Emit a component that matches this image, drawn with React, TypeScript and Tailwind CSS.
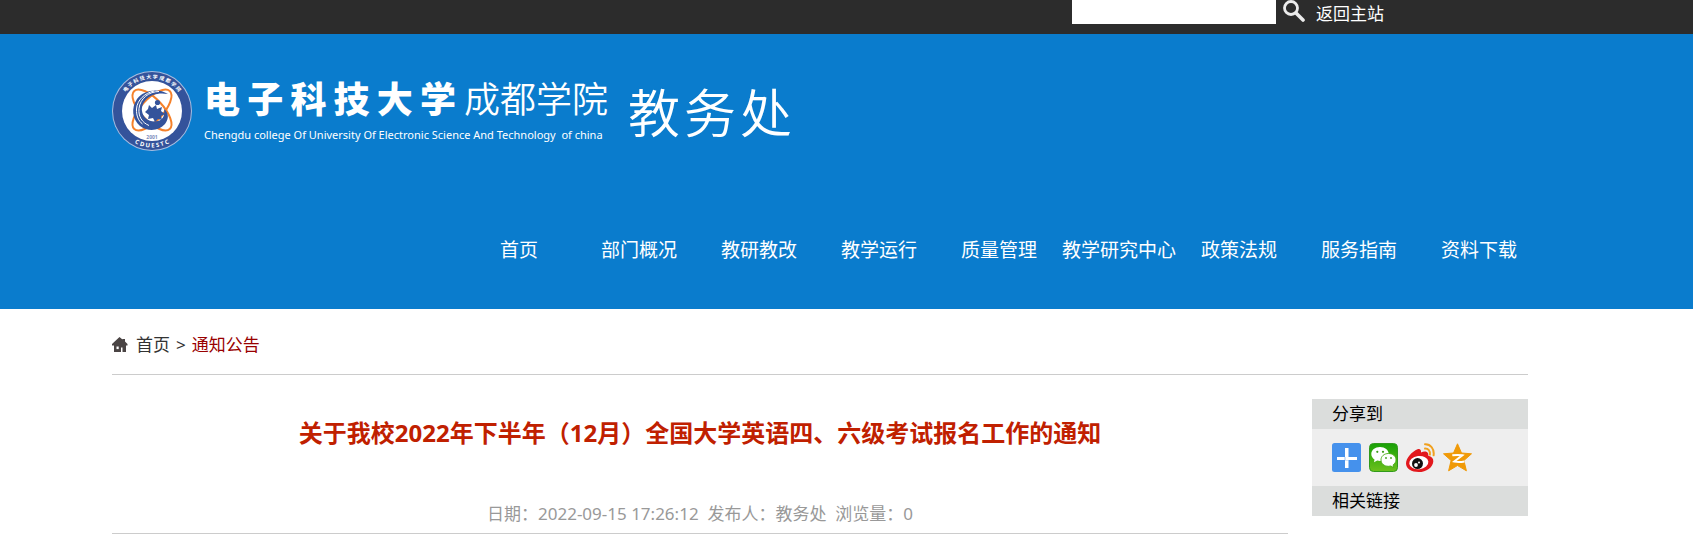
import React from 'react';

const navItems = [
  '首页',
  '部门概况',
  '教研教改',
  '教学运行',
  '质量管理',
  '教学研究中心',
  '政策法规',
  '服务指南',
  '资料下载',
];

const schoolName = ['电', '子', '科', '技', '大', '学'];
const officeName = ['教', '务', '处'];

const Emblem: React.FC = () => (
  <svg viewBox="0 0 80 80" className="h-20 w-20 shrink-0" role="img" aria-label="校徽">
    <defs>
      <path id="ring-top" d="M7.500 40a32.500 32.500 0 0 1 65 0" />
      <path id="ring-bottom" d="M3.500 40a36.500 36.500 0 0 0 73 0" />
    </defs>
    <circle cx="40" cy="40" r="40" fill="#a9bde0" />
    <circle cx="40" cy="40" r="39" fill="#34539b" />
    <circle cx="40" cy="40" r="30" fill="#fff" />
    <g fill="none" stroke="#f5812a" strokeWidth="2">
      <ellipse cx="40" cy="39" rx="26" ry="11" transform="rotate(47 40 39)" />
      <ellipse cx="40" cy="39" rx="26" ry="11" transform="rotate(-47 40 39)" />
    </g>
    <path
      d="M56 23C46 17 32 19 25 28c-6 9-5 20 3 27 8 6 19 5 25-2 4-5 4-11-1-15 1 6-1 11-6 12-8 2-15-3-16-10C29 30 39 20 56 23z"
      fill="#34539b"
    />
    <g fill="none" stroke="#fff" strokeWidth="1">
      <path d="M47 20.500c-10 0-19 7-20 17-.8 8 3 14 10 17" />
      <path d="M42 20c-9 2-17 9-17.500 18-.2 7 2 12 6 15" />
    </g>
    <path d="M33 41l3-3 1-4 3 3 4-3 1 4 5-2-1 4 4 3-4 2 1 4-4-1-3 3-2-4-5 1 1-4z" fill="#34539b" />
    <circle cx="45.500" cy="31.500" r="2.600" fill="#34539b" />
    <text x="40" y="67.500" textAnchor="middle" fontSize="5" fontWeight="700" fill="#7c8dbc">2001</text>
    <text fontSize="5" fontWeight="700" fill="#fff" textAnchor="middle">
      <textPath href="#ring-top" startOffset="50%">电  子  科  技  大  学  成  都  学  院</textPath>
    </text>
    <text fontSize="6" fontWeight="700" fill="#fff" textAnchor="middle">
      <textPath href="#ring-bottom" startOffset="50%">C D U E S T C</textPath>
    </text>
  </svg>
);

const SearchIcon: React.FC = () => (
  <svg viewBox="0 0 22 22" className="h-[22px] w-[22px]" fill="none" aria-hidden="true">
    <circle cx="8" cy="8" r="6.500" stroke="#ececec" strokeWidth="2.800" />
    <path d="M13 13l7 7" stroke="#ececec" strokeWidth="3.600" strokeLinecap="round" />
  </svg>
);

const HomeIcon: React.FC = () => (
  <svg viewBox="0 0 16 16" className="h-4 w-4" aria-hidden="true">
    <path d="M7.500 0l3 2.500V2h2.500v2.600L15.500 7v1.500H14V15h-3.500v-4.500H9V15H2V8.500H0V7z" fill="#4a4444" />
    <path d="M4.500 9.500h2.200v2.600H4.500z" fill="#fff" />
  </svg>
);

const PlusIcon: React.FC = () => (
  <svg viewBox="0 0 29 29" className="h-[29px] w-[29px]" aria-hidden="true">
    <rect width="29" height="29" rx="2.500" fill="#4591ec" />
    <path d="M13 5h3.500v9H25v3h-8.500v8H13v-8H5v-3h8z" fill="#fff" />
    <path d="M12.500 14h1v3h-1zM13 17h3.500v.6H13z" fill="#4591ec" opacity=".5" />
  </svg>
);

const WechatIcon: React.FC = () => (
  <svg viewBox="0 0 29 29" className="h-[29px] w-[29px]" aria-hidden="true">
    <defs>
      <linearGradient id="wechat-bg" x1="0" y1="0" x2="0" y2="1">
        <stop offset="0" stopColor="#17a006" />
        <stop offset="1" stopColor="#6cc01c" />
      </linearGradient>
    </defs>
    <rect x=".5" y=".5" width="28" height="28" rx="4" fill="url(#wechat-bg)" stroke="#319a1c" />
    <path d="M11 4c-5 0-8.700 3-8.700 7 0 2.300 1.200 4.200 3.200 5.500L5 19.300l3.200-1.700c.9.2 1.800.4 2.800.4 5 0 8.700-3 8.700-7S16 4 11 4z" fill="#fff" />
    <path d="M19.500 10.500c-4.400 0-7.500 2.800-7.500 6.400s3.100 6.400 7.500 6.400c.8 0 1.600-.1 2.300-.3l2.900 1.600-.6-2.700c1.700-1.200 2.900-3 2.900-5 0-3.600-3.100-6.400-7.500-6.400z" fill="#fff" stroke="#46aa12" strokeWidth=".9" />
    <g fill="#3c9c18">
      <circle cx="8.300" cy="8.800" r="1.100" />
      <circle cx="14" cy="8.800" r="1.100" />
      <circle cx="17" cy="15" r=".9" />
      <circle cx="22" cy="15" r=".9" />
    </g>
  </svg>
);

const WeiboIcon: React.FC = () => (
  <svg viewBox="0 0 29 29" className="h-[29px] w-[29px]" aria-hidden="true">
    <path
      d="M11.500 6.200c2-.9 4 .1 3.500 3.300 3.200-1.500 7.800-1.700 7.300 3.300 3.200.8 5.200 2.600 5 5.600-.3 5.800-7 10.600-14.600 10.600C5.600 29 0 25.500 0 20.500 0 15 6 8.500 11.500 6.200z"
      fill="#e2181d"
    />
    <ellipse cx="12.800" cy="19.600" rx="9.600" ry="6.600" fill="#fff" transform="rotate(-7 12.800 19.600)" />
    <circle cx="11.500" cy="20.600" r="5.500" fill="#111" />
    <circle cx="10" cy="22" r="1.900" fill="#fff" />
    <circle cx="13" cy="19.600" r="1" fill="#fff" />
    <g fill="none" stroke="#f0a01e" strokeWidth="2" strokeLinecap="round">
      <path d="M19 1.300c5.500-.3 9.500 4.500 8.600 11" />
      <path d="M19 5.600c3.300-.1 5.300 2.300 4.900 6" />
    </g>
  </svg>
);

const QzoneIcon: React.FC = () => (
  <svg viewBox="0 0 29 29" className="h-[29px] w-[29px]" aria-hidden="true">
    <path
      d="M14.500.8l4 9.200 10 .8-7.600 6.700 2.500 10.300-8.900-5.300-8.900 5.300 2.500-10.300L.5 10.800l10-.8z"
      fill="#f09a08"
      stroke="#f09a08"
      strokeLinejoin="round"
    />
    <path d="M9.300 12.300c3.200-.5 6.700-.5 10 0l-8 6.200c3.300.7 6.500.6 10.200-.1" fill="none" stroke="#fff" strokeWidth="2" />
  </svg>
);

const shareLinks = [
  { id: 'more', label: '更多分享', icon: PlusIcon },
  { id: 'wechat', label: '微信', icon: WechatIcon },
  { id: 'weibo', label: '新浪微博', icon: WeiboIcon },
  { id: 'qzone', label: 'QQ空间', icon: QzoneIcon },
];

const TopBar: React.FC = () => (
  <div className="h-[34px] bg-[#2c2c2c] pr-[165px] pl-28">
    <form className="flex items-start justify-end pr-36" onSubmit={(e) => e.preventDefault()}>
      <input type="search" aria-label="站内搜索" className="h-6 w-51 bg-white px-2 text-sm text-black outline-none" />
      <button type="submit" aria-label="搜索" className="ml-[7px]">
        <SearchIcon />
      </button>
      <a href="#main" className="ml-[11px] text-[17px] leading-7 text-white">返回主站</a>
    </form>
  </div>
);

const Header: React.FC = () => (
  <header className="bg-[#0a7ccd] pt-[37px] pr-[165px] pb-[45px] pl-28 text-white">
    <div className="flex">
      <Emblem />
      <div className="ml-3 w-101 shrink-0">
        <div className="flex h-[58px] items-center justify-between">
          <div className="flex w-[252px] justify-between text-[36px] leading-none font-black">
            {schoolName.map((char) => (
              <span key={char}>{char}</span>
            ))}
          </div>
          <span className="text-[36px] leading-none font-[350]">成都学院</span>
        </div>
        <p className="text-[11px] leading-3 whitespace-pre">
          Chengdu college Of University Of Electronic Science And Technology  of china
        </p>
      </div>
      <div className="ml-5 flex gap-1 text-[52px] leading-[84px] font-[350]">
        {officeName.map((char) => (
          <span key={char}>{char}</span>
        ))}
      </div>
    </div>
    <nav className="mt-[81px] -mr-[11px] flex justify-end">
      {navItems.map((item) => (
        <a key={item} href="#nav" className="w-30 shrink-0 text-center text-[19px] leading-7 whitespace-nowrap">
          {item}
        </a>
      ))}
    </nav>
  </header>
);

const Sidebar: React.FC = () => (
  <aside className="w-54 shrink-0 bg-[#eee] text-[17px] text-black">
    <h2 className="bg-[#dbdddc] pl-5 leading-[30px]">分享到</h2>
    <div className="flex gap-2 px-5 py-[14px]">
      {shareLinks.map((link) => (
        <a key={link.id} href="#share" aria-label={link.label}>
          <link.icon />
        </a>
      ))}
    </div>
    <h2 className="bg-[#dbdddc] pl-5 leading-[30px]">相关链接</h2>
  </aside>
);

const App: React.FC = () => {
  return (
    <div className="min-h-screen bg-white font-['Noto_Sans','Noto_Sans_CJK_SC',sans-serif]">
      <TopBar />
      <Header />
      <main id="main" className="pr-[165px] pl-28">
        <div className="flex items-center border-b border-[#ccc] pt-[22px] pb-[15px] text-[17px] leading-7 text-[#333]">
          <HomeIcon />
          <a href="#home" className="ml-2">首页</a>
          <span className="mx-[6px]">&gt;</span>
          <a href="#notice" className="text-[#900]">通知公告</a>
        </div>
        <div className="flex items-start gap-6 pt-6">
          <article className="grow border-b border-[#ccc] pt-4 pb-[5px] text-center">
            <h1 className="text-2xl leading-9 font-bold text-[#c02000]">
              关于我校2022年下半年（12月）全国大学英语四、六级考试报名工作的通知
            </h1>
            <p className="mt-[49px] text-[17px] leading-7 whitespace-pre text-[#999]">
              日期：2022-09-15 17:26:12  发布人：教务处  浏览量：0
            </p>
          </article>
          <Sidebar />
        </div>
      </main>
    </div>
  );
};

export default App;
